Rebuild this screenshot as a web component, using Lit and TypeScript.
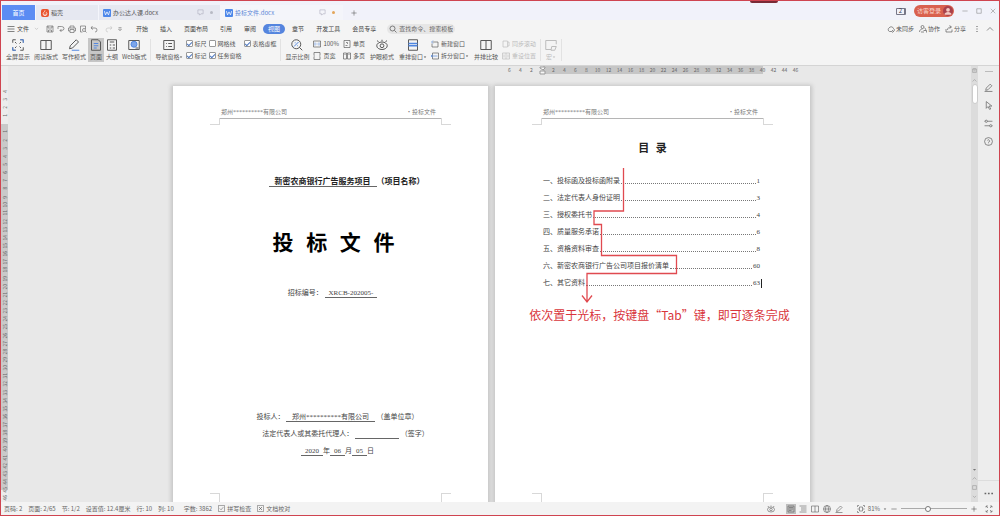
import { LitElement, html, svg, css, nothing } from "lit";
import { customElement, property, state } from "lit/decorators.js";
import { classMap } from "lit/directives/class-map.js";

/* Line icons, all drawn on a 16 x 16 grid. */
const ICONS: Record<string, unknown> = {
  menu: svg`<path d="M1 3h14M1 8h14M1 13h14"/>`,
  chevron: svg`<path d="M3 6l5 5 5-5"/>`,
  chevronUp: svg`<path d="M2 11l6-6 6 6"/>`,
  caret: svg`<path d="M3 6h10l-5 6z" fill="currentColor" stroke="none"/>`,
  save: svg`<path d="M2 2h12v12H2zM4 2v4h8V2M5 14v-4h6v4"/>`,
  exportPdf: svg`<path d="M2 3h7a5 4 0 0 1 0 8H6M9 8l-3 3 3 3M2 3v5"/>`,
  print: svg`<path d="M4 6V2h8v4M4 12H1V6h14v6h-3M4 9h8v6H4z"/>`,
  preview: svg`<path d="M13 8V2H3v12h4"/><circle cx="10" cy="10" r="3"/><path d="M12 12l3 3"/>`,
  undo: svg`<path d="M5 2L2 6l4 3M2 6h8a4 4 0 0 1 0 8"/>`,
  redo: svg`<path d="M11 2l3 4-4 3M14 6H6a4 4 0 0 0 0 8"/>`,
  more: svg`<path d="M4 4h8M4 8l4 5 4-5z"/>`,
  search: svg`<circle cx="7" cy="7" r="5"/><path d="M11 11l4 4"/>`,
  monitor: svg`<path d="M2 2h12v9H9l-3 3v-3H2z"/>`,
  plus: svg`<path d="M8 1v14M1 8h14"/>`,
  minus: svg`<path d="M1 8h14"/>`,
  square: svg`<path d="M2 2h12v12H2z"/>`,
  close: svg`<path d="M2 2l12 12M14 2L2 14"/>`,
  cloud: svg`<path d="M10 13H5a4 4 0 0 1-1-7 5 5 0 0 1 9 1 3.500 3.500 0 0 1 0 6M10 10l3 3-3 2"/>`,
  collab: svg`<circle cx="7" cy="4" r="3"/><path d="M1 14c0-4 3-6 6-6M4 14h6M11 6c3 1 3 3 1 5M9 11h6v4"/>`,
  share: svg`<path d="M2 8v6h12V9M5 10c0-4 3-6 7-6M9 1l4 3-4 3"/>`,
  dotsV: svg`<path d="M8 2v2M8 7v2M8 12v2" stroke-width="2"/>`,
  full: svg`<path d="M1 5V1h4M11 1h4v4M15 11v4h-4M5 15H1v-4M6 6L4 4M10 6l2-2M10 10l2 2M6 10l-2 2"/><path d="M11 1h4v4M5 15H1v-4" stroke="#4f86e0"/>`,
  book: svg`<path d="M1 2h14v12H1zM8 2v12"/>`,
  pen: svg`<path d="M3 9l8-8 3 3-8 8-4 1z"/><path d="M5 15h10" stroke="#4f86e0"/>`,
  page: svg`<path d="M2 1h9l3 3v11H2z"/><path d="M5 6h6M5 9h6M5 12h4" stroke="#4f86e0"/>`,
  outline: svg`<path d="M2 1h12v14H2zM5 4h6M5 8h2M9 8h3M5 12h2M9 12h3"/>`,
  web: svg`<path d="M1 2h14v12H1z"/><circle cx="8" cy="7" r="4" fill="#7da6ea" stroke="#4f86e0"/><path d="M10 12h4"/>`,
  nav: svg`<path d="M1 2h14v12H1zM4 6h1M4 10h1M7 6h5M7 10h5"/>`,
  zoom: svg`<circle cx="7" cy="7" r="6"/><path d="M11 11l4 4"/><path d="M4 10l6-6M5 5h1M8 9h1" stroke="#4f86e0"/>`,
  one: svg`<path d="M1 2h14v12H1z"/><path d="M4 5v6M12 5v6M8 6v1M8 9v1" stroke="#4f86e0"/>`,
  single: svg`<path d="M2 1h12v14H2zM6 5l3 0v3M5 11l4 0"/>`,
  wide: svg`<path d="M2 6V1h12v5M2 10v5h12v-5M1 8h3M12 8h3"/>`,
  multi: svg`<path d="M1 2h6v12H1zM9 2h6v12H9zM3 5h2M11 5h2"/>`,
  eye: svg`<ellipse cx="8" cy="9" rx="7" ry="5"/><circle cx="8" cy="9" r="2.500"/><path d="M3 4L2 2M8 3V1M13 4l1-2"/>`,
  arrange: svg`<path d="M2 1h12v14H2z"/><path d="M2 6h12M2 9h12" stroke="#4f86e0" stroke-width="2"/>`,
  newWin: svg`<path d="M3 4h11v10H2V7"/><path d="M4 1L1 4l3 3" stroke="#4f86e0"/>`,
  splitWin: svg`<path d="M3 2h12v12H3z"/><path d="M0 8h13M3 5L0 8l3 3" stroke="#4f86e0"/>`,
  sync: svg`<path d="M2 2h9v12H2zM12 4h2v8h-2"/>`,
  resetPos: svg`<path d="M1 2h14v12H1zM8 2v12M4 5v6M12 5v6"/>`,
  macro: svg`<path d="M15 7V2H1v12h7"/><path d="M9 10h6l-2 5H8z"/>`,
  edit: svg`<path d="M4 9l7-7 3 3-7 7-4 1zM1 15h14"/>`,
  cursor: svg`<path d="M4 1l10 8H9l3 5-2 1-3-5-3 3z"/>`,
  sliders: svg`<path d="M1 4h14M1 12h14"/><circle cx="4" cy="4" r="2" fill="#f0f0f0"/><circle cx="12" cy="12" r="2" fill="#f0f0f0"/>`,
  help: svg`<circle cx="8" cy="8" r="7"/><path d="M6 6a2 2 0 1 1 2 3v1M8 12v1"/>`,
  dotsH: svg`<path d="M1 8h3M7 8h3M13 8h3" stroke-width="3"/>`,
  lines: svg`<path d="M1 2h14M4 6h11M4 10h11M1 14h14"/>`,
  doc: svg`<path d="M2 2h12v12H2zM4 5h8M4 8h8M4 11h5"/>`,
  globe: svg`<circle cx="8" cy="8" r="7"/><ellipse cx="8" cy="8" rx="3" ry="7"/><path d="M1 8h14"/>`,
  fit: svg`<path d="M1 4V1h3M12 1h3v3M15 12v3h-3M4 15H1v-3M5 4h6v8H5zM1 8h3M12 8h3"/>`,
  expand: svg`<path d="M2 5V2h4M10 2h4v3M14 11v3h-4M6 14H2v-3M2 2l4 4M14 2l-4 4M14 14l-4-4M2 14l4-4"/>`,
  spell: svg`<path d="M1 1h14v14H1zM4 8l3 3 5-6"/>`,
  proof: svg`<path d="M1 1h14v14H1z"/><path d="M5 5l6 6M11 5l-6 6" stroke-width="2"/>`,
  toggle: svg`<path d="M2 3h12v11H2zM6 1v4M10 1v4M5 9h6"/>`,
};

@customElement("wps-icon")
export class WpsIcon extends LitElement {
  @property() name = "";
  static styles = css`
    :host { display: inline-flex; flex: none; width: 8px; height: 8px; }
    svg { width: 100%; height: 100%; fill: none; stroke: currentColor; stroke-width: 1.3; }
  `;
  render() {
    return html`<svg viewBox="0 0 16 16" aria-hidden="true">${ICONS[this.name] ?? nothing}</svg>`;
  }
}

const controls = css`
  :host, * { box-sizing: border-box; }
  button {
    font: inherit; color: inherit; background: none; border: 0; padding: 0; margin: 0;
    display: inline-flex; align-items: center; white-space: nowrap; cursor: pointer;
  }
`;

@customElement("title-bar")
export class TitleBar extends LitElement {
  static styles = [controls, css`
    :host { display: flex; align-items: flex-end; justify-content: space-between; height: 19px; padding-left: 1px; background: #f1f2fa; }
    .tabs { display: flex; height: 15px; }
    .tab { gap: 2px; padding: 0 5px; background: #e6e8f1; border-right: 1px solid #f4f5fb; color: #555; }
    .home { width: 34px; justify-content: center; background: #5b8cf3; color: #fff; }
    .shell { width: 63px; }
    .doc { width: 122px; padding: 0 4px; }
    .active { background: #f4f5fa; color: #5b87d8; }
    .grow { flex: 1; text-align: left; }
    .logo { display: inline-flex; align-items: center; justify-content: center; width: 8px; height: 8px; border-radius: 1px; background: #4d87ea; color: #fff; }
    .logo svg { width: 6px; height: 6px; fill: none; stroke: currentColor; stroke-width: 2; }
    .flame { border-radius: 2px; background: #e9532f; }
    .screen { color: #aab; width: 7px; height: 7px; margin-right: 4px; }
    .dot { width: 3px; height: 3px; margin-right: 3px; border-radius: 50%; background: #b8bac4; }
    .orange { background: #e3a65a; }
    .add { padding: 0 8px; color: #444; }
    .add wps-icon { width: 6px; height: 6px; }
    .win { display: flex; align-items: center; height: 18px; gap: 8px; padding-right: 3px; color: #777; }
    .win wps-icon { width: 6px; height: 6px; }
    .count { justify-content: center; width: 10px; height: 7px; border: 1px solid #778; border-right-width: 2px; border-radius: 1px; line-height: 6px; color: #445; }
    .login { gap: 2px; height: 12px; padding: 0 1px 0 3px; border-radius: 6px; background: #d9604f; color: #fbd9d2; }
    .face { width: 10px; height: 10px; border-radius: 50%; background: #a8404c; }
  `];
  render() {
    const w = html`<span class="logo"><svg viewBox="0 0 16 16"><path d="M1 3l3 10 4-8 4 8 3-10"/></svg></span>`;
    return html`
      <div class="tabs">
        <button class="tab home">首页</button>
        <button class="tab shell"><span class="logo flame"><svg viewBox="0 0 16 16"><path d="M8 1c-1 5-5 5-5 9a5 5 0 0 0 10 0c0-3-2-3-2-5M8 14v-4"/></svg></span>稻壳</button>
        <button class="tab doc">${w}<span class="grow">办公达人课.docx</span><wps-icon class="screen" name="monitor"></wps-icon><i class="dot"></i></button>
        <button class="tab doc active">${w}<span class="grow">投标文件.docx</span><wps-icon class="screen" name="monitor"></wps-icon><i class="dot orange"></i></button>
        <button class="add" aria-label="新建"><wps-icon name="plus"></wps-icon></button>
      </div>
      <div class="win">
        <button class="count">2</button>
        <button class="login">访客登录<svg class="face" viewBox="0 0 16 16"><circle cx="8" cy="6" r="3" fill="#f4c9c2"/><path d="M2 14c1-6 11-6 12 0z" fill="#f4c9c2"/></svg></button>
        <button aria-label="最小化"><wps-icon name="minus"></wps-icon></button>
        <button aria-label="最大化"><wps-icon name="square"></wps-icon></button>
        <button aria-label="关闭"><wps-icon name="close"></wps-icon></button>
      </div>`;
  }
}

@customElement("menu-bar")
export class MenuBar extends LitElement {
  @state() private current = "视图";
  static styles = [controls, css`
    :host { display: flex; align-items: center; justify-content: space-between; height: 17px; padding: 0 5px 0 6px; color: #444; }
    .left, .quick, .menus, .right { display: flex; align-items: center; }
    .file { gap: 2px; }
    .file .arrow { width: 5px; height: 5px; margin-left: 3px; color: #999; }
    .quick { gap: 3px; padding: 0 13px 0 7px; color: #666; }
    .quick .faint { color: #c4c4c4; margin-left: 4px; }
    .quick .small { width: 6px; height: 6px; margin-left: 1px; }
    .menus { gap: 12px; }
    .on { margin: 0 -5px; padding: 0 5px; height: 10px; border-radius: 5px; background: #5585de; color: #fff; }
    .search { display: flex; align-items: center; gap: 2px; height: 10px; margin-left: 11px; padding: 0 2px; border-radius: 5px; background: #e6e6e6; }
    .search input { width: 54px; height: 10px; padding: 0; border: 0; background: none; font: inherit; color: #555; }
    .search input::placeholder { color: #666; }
    .right { gap: 5px; color: #555; }
    .right button { gap: 1px; }
    .end { margin-left: 2px; }
  `];
  render() {
    const menus = ["开始", "插入", "页面布局", "引用", "审阅", "视图", "章节", "开发工具", "会员专享"];
    return html`
      <div class="left">
        <button class="file"><wps-icon name="menu"></wps-icon>文件<wps-icon class="arrow" name="chevron"></wps-icon></button>
        <div class="quick">
          ${[["save", "保存"], ["exportPdf", "输出"], ["print", "打印"], ["preview", "预览"], ["undo", "撤销"]].map(
            ([n, t]) => html`<button aria-label=${t}><wps-icon name=${n}></wps-icon></button>`)}
          <button class="faint" aria-label="恢复"><wps-icon name="redo"></wps-icon></button>
          <button aria-label="更多"><wps-icon class="small" name="more"></wps-icon></button>
        </div>
        <nav class="menus">
          ${menus.map((m) => html`<button class=${classMap({ on: m === this.current })} @click=${() => (this.current = m)}>${m}</button>`)}
        </nav>
        <label class="search"><wps-icon name="search"></wps-icon><input aria-label="查找" placeholder="查找命令、搜索模板" /></label>
      </div>
      <div class="right">
        <button><wps-icon name="cloud"></wps-icon>未同步</button>
        <button><wps-icon name="collab"></wps-icon>协作</button>
        <button><wps-icon name="share"></wps-icon>分享</button>
        <button class="end" aria-label="更多"><wps-icon name="dotsV"></wps-icon></button>
        <button aria-label="收起"><wps-icon name="chevronUp"></wps-icon></button>
      </div>`;
  }
}

@customElement("view-ribbon")
export class ViewRibbon extends LitElement {
  static styles = [controls, css`
    :host { display: flex; align-items: center; gap: 4px; height: 29px; padding: 0 5px 3px; color: #555; border-bottom: 1px solid #d4d4d4; }
    .tool { flex-direction: column; gap: 1px; height: 24px; padding-top: 1px; line-height: 10px; }
    .tool wps-icon { width: 12px; height: 12px; }
    .tool .label wps-icon, .label wps-icon { width: 4px; height: 4px; }
    .label { display: flex; align-items: center; }
    .on { margin: 0 -2px; padding: 1px 2px 0; background: #c6c6c6; }
    .rule { flex: none; width: 1px; height: 22px; background: #e2e2e2; }
    .pair { display: grid; grid-template-columns: auto auto; gap: 2px 4px; }
    .pair.solo { grid-template-columns: auto; }
    .pair button, .pair label { display: flex; align-items: center; gap: 2px; height: 10px; white-space: nowrap; }
    .pair.checks { grid-template-columns: 20px 32px auto; column-gap: 3px; margin-left: -1px; }
    .checks label { gap: 1px; }
    .more { padding-left: 1px; }
    input { appearance: none; flex: none; display: flex; justify-content: center; width: 7px; height: 7px; margin: 0; border: 1px solid #999; border-radius: 1px; background: #fff; }
    input:checked::before { content: ""; width: 2px; height: 4px; border: solid #4f79c0; border-width: 0 1px 1px 0; transform: rotate(45deg); }
    .off { color: #bbb; }
  `];
  private tool(icon: string, label: string, cls = "", drop = false) {
    return html`<button class="tool ${cls}"><wps-icon name=${icon}></wps-icon><span class="label">${label}${drop ? html`<wps-icon name="caret"></wps-icon>` : nothing}</span></button>`;
  }
  private mini(icon: string, label: string, drop = false) {
    return html`<button><wps-icon name=${icon}></wps-icon><span class="label">${label}${drop ? html`<wps-icon name="caret"></wps-icon>` : nothing}</span></button>`;
  }
  private check(label: string, on: boolean) {
    return html`<label><input type="checkbox" ?checked=${on} />${label}</label>`;
  }
  render() {
    return html`
      ${this.tool("full", "全屏显示")}${this.tool("book", "阅读版式")}${this.tool("pen", "写作模式")}
      ${this.tool("page", "页面", "on")}${this.tool("outline", "大纲")}${this.tool("web", "Web版式")}
      <i class="rule"></i>
      ${this.tool("nav", "导航窗格", "", true)}
      <div class="pair checks">
        ${this.check("标尺", true)}${this.check("网格线", false)}${this.check("表格虚框", true)}
        ${this.check("标记", true)}${this.check("任务窗格", true)}
      </div>
      <i class="rule"></i>
      ${this.tool("zoom", "显示比例")}
      <div class="pair">${this.mini("one", "100%")}${this.mini("single", "单页")}${this.mini("wide", "页宽")}${this.mini("multi", "多页")}</div>
      <div class="more">${this.tool("eye", "护眼模式")}</div>
      <div class="more">${this.tool("arrange", "重排窗口", "", true)}</div>
      <div class="pair solo">${this.mini("newWin", "新建窗口")}${this.mini("splitWin", "拆分窗口", true)}</div>
      <div class="more">${this.tool("book", "并排比较")}</div>
      <div class="pair solo off">${this.mini("sync", "同步滚动")}${this.mini("resetPos", "重设位置")}</div>
      <i class="rule"></i>
      ${this.tool("macro", "宏", "off", true)}
      <i class="rule"></i>`;
  }
}

@customElement("doc-page")
export class DocPage extends LitElement {
  static styles = css`
    * { box-sizing: border-box; }
    :host {
      position: relative; display: flex; flex-direction: column; width: 315px; flex: none; background: #fff; color: #444;
      font-family: "Liberation Serif", "Noto Sans CJK SC", serif; box-shadow: 0 1px 4px 2px #c4c4c4;
    }
    .head, .foot { display: grid; grid-template-columns: 10px 1fr 10px; margin: 0 37px; }
    .head { padding-top: 20px; }
    .line { display: flex; justify-content: space-between; height: 13px; padding: 0 5px 0 1px; line-height: 13px; font-size: 6px; color: #777; border-bottom: 1px solid #b5b5b5; }
    .mark { height: 7px; border: 0 solid #d8d8d8; }
    .tl { border-width: 0 1px 1px 0; }
    .tr { border-width: 0 0 1px 1px; }
    .head .mark { align-self: end; margin-bottom: -6px; }
    .foot { margin-top: auto; }
    .foot .mark { height: 9px; }
    .bl { border-width: 1px 1px 0 0; }
    .br { grid-column: 3; border-width: 1px 0 0 1px; }
  `;
  render() {
    return html`
      <header class="head">
        <i class="mark tl"></i>
        <div class="line"><span>郑州**********有限公司</span><span>・投标文件</span></div>
        <i class="mark tr"></i>
      </header>
      <slot></slot>
      <footer class="foot"><i class="mark bl"></i><i class="mark br"></i></footer>`;
  }
}

const TOC: [string, string][] = [
  ["一、投标函及投标函附录", "1"],
  ["二、法定代表人身份证明", "3"],
  ["三、授权委托书", "4"],
  ["四、质量服务承诺", "6"],
  ["五、资格资料审查", "8"],
  ["六、新密农商银行广告公司项目报价清单", "60"],
  ["七、其它资料", "63"],
];

@customElement("doc-canvas")
export class DocCanvas extends LitElement {
  static styles = css`
    * { box-sizing: border-box; }
    :host { display: grid; grid-template-columns: 7px 1fr 7px 21px; min-height: 0; background: #e8e8e8; color: #666; }
    .vrule { display: grid; padding-top: 21px; overflow: hidden; font-size: 5px; background: #ececec; }
    .bands, .ticks { grid-area: 1 / 1; display: flex; min-height: 0; }
    .vrule .bands, .vrule .ticks { flex-direction: column; }
    .vrule .ticks span { flex: 1 1 0; min-height: 0; display: flex; align-items: center; justify-content: center; writing-mode: sideways-lr; line-height: 6px; }
    .before { flex: 4.5; }
    .body { flex: 45; background: #c9c9c9; }
    .after { flex: 1.5; }
    .work { display: flex; flex-direction: column; align-items: center; overflow: hidden; min-width: 0; padding-left: 4px; }
    .hrule { display: grid; width: 637px; height: 8px; flex: none; padding-left: 331px; font-size: 5px; }
    .hrule .ticks span { flex: none; width: 11px; line-height: 8px; text-align: center; }
    .hrule .bands { padding-left: 39px; }
    .hrule .bands i { width: 220px; background: #c6c6c6; }
    .hrule svg { width: 7px; height: 9px; fill: #f6f6f6; stroke: #999; }
    .pages { display: flex; flex: 1; gap: 7px; padding-top: 12px; min-height: 0; }
    .scroll { display: flex; flex-direction: column; align-items: center; background: #dcdcdc; color: #777; }
    .scroll wps-icon { width: 5px; height: 5px; }
    .corner { margin: 2px 0 5px; }
    .thumb { width: 6px; height: 20px; margin-top: 1px; border: 1px solid #ccc; border-radius: 3px; background: #fff; }
    .jump { display: flex; flex-direction: column; gap: 4px; margin: auto 0 3px; }
    .side { display: flex; flex-direction: column; align-items: center; gap: 9px; padding: 5px 0 4px; background: #ededed; color: #666; }
    .side wps-icon { width: 9px; height: 9px; }
    .side .grip { width: 8px; height: 1px; margin: 0 0 2px; background: #bbb; }
    .side .tail { width: 100%; margin-top: auto; padding-top: 8px; border-top: 1px solid #ddd; display: flex; justify-content: center; }

    .cover { display: flex; flex-direction: column; align-items: center; padding-top: 58px; text-align: center; white-space: pre; }
    h1, h2, p { margin: 0; }
    u { text-decoration: none; border-bottom: 1px solid #666; padding: 0 4px; }
    .project { font-size: 8px; line-height: 10px; font-weight: 700; color: #222; padding-left: 32px; }
    .project u { padding: 0 6px; }
    .name { margin-top: 42px; font: 700 21px/31px "Liberation Mono", "Noto Sans CJK SC", monospace; color: #000; padding-left: 6px; }
    .small { font-size: 7px; line-height: 10px; }
    .code { margin-top: 28px; padding-left: 4px; }
    .sign { display: flex; flex-direction: column; gap: 7px; margin-top: 114px; padding-left: 14px; align-items: center; }
    .sign .rep { padding-left: 16px; }
    .sign u.blank { padding: 0 22px; }

    .toc-title { margin-top: 23px; font: 700 11px/14px "Liberation Mono", "Noto Sans CJK SC", monospace; color: #222; text-align: center; }
    ol { display: flex; flex-direction: column; gap: 7px; margin: 20px 50px 0 48px; padding: 0; list-style: none; font-size: 7px; }
    li { display: flex; align-items: center; gap: 1px; height: 10px; line-height: 10px; white-space: nowrap; }
    .leader { flex: 1; height: 6px; border-bottom: 1px dotted #777; }
    .caret { width: 1px; height: 9px; margin-right: -2px; background: #222; }
    .ink { position: absolute; top: 80px; left: 0; width: 100%; color: #e04a50; }
    .ink svg { display: block; width: 315px; height: 140px; fill: none; stroke: currentColor; stroke-width: 1.3; }
    .note { padding-left: 14px; font: 12px/18px "Noto Sans CJK SC", sans-serif; text-align: center; white-space: nowrap; color: #d9363c; }
  `;
  render() {
    const v = Array.from({ length: 51 }, (_, i) => i - 4);
    const h = Array.from({ length: 27 }, (_, i) => i - 3);
    return html`
      <div class="vrule">
        <div class="bands"><i class="before"></i><i class="body"></i><i class="after"></i></div>
        <div class="ticks">${v.map((n) => html`<span>${n === 0 ? "" : Math.abs(n)}</span>`)}</div>
      </div>
      <main class="work">
        <div class="hrule">
          <div class="bands"><i></i></div>
          <div class="ticks">${h.map((n) => html`<span>${n === 0 ? html`<svg viewBox="0 0 7 9"><path d="M1 1h5v1L4 4 1 2zM1 5h5v3H1z"/></svg>` : Math.abs(n * 2)}</span>`)}</div>
        </div>
        <div class="pages">
          <doc-page>
            <div class="cover">
              <p class="project"><u>新密农商银行广告服务项目</u>（项目名称）</p>
              <h1 class="name">投 标 文 件</h1>
              <p class="small code">招标编号： <u>XRCB-202005-</u></p>
              <div class="sign small">
                <p>投标人： <u> 郑州**********有限公司 </u> （盖单位章）</p>
                <p class="rep">法定代表人或其委托代理人： <u class="blank"></u> （签字）</p>
                <p><u>2020</u>年<u>06</u>月<u>05</u>日</p>
              </div>
            </div>
          </doc-page>
          <doc-page>
            <h2 class="toc-title">目 录</h2>
            <ol>
              ${TOC.map(([t, p], i) => html`<li><span>${t}</span><i class="leader"></i><span>${p}</span>${i === TOC.length - 1 ? html`<i class="caret"></i>` : nothing}</li>`)}
            </ol>
            <div class="ink">
              <svg viewBox="0 0 315 140"><path d="M128.500 2V45H99V58.500H106.500V89.500H181.500V107.500H92V136M87 129.500l5 6.500 5-6.500"/></svg>
              <p class="note">依次置于光标，按键盘“Tab”键，即可逐条完成</p>
            </div>
          </doc-page>
        </div>
      </main>
      <div class="scroll">
        <wps-icon class="corner" name="toggle"></wps-icon>
        <wps-icon name="chevronUp"></wps-icon>
        <i class="thumb"></i>
        <div class="jump">${["caret", "chevronUp", "square", "chevron"].map((n) => html`<wps-icon name=${n}></wps-icon>`)}</div>
      </div>
      <aside class="side">
        <i class="grip"></i>
        ${["edit", "cursor", "sliders", "help"].map((n) => html`<wps-icon name=${n}></wps-icon>`)}
        <div class="tail"><wps-icon name="dotsH"></wps-icon></div>
      </aside>`;
  }
}

@customElement("status-bar")
export class StatusBar extends LitElement {
  @state() private zoom = 81;
  static styles = [controls, css`
    :host { display: flex; align-items: center; justify-content: space-between; height: 13px; padding: 0 6px 0 3px; background: #f3f3f3; color: #666; white-space: nowrap; }
    .info, .view { display: flex; align-items: center; }
    .info { gap: 6px; }
    .info button { gap: 2px; }
    .info .words { margin-left: 4px; }
    .info wps-icon { width: 7px; height: 7px; }
    .view { gap: 4px; }
    .view .lead { margin-right: 8px; }
    .on { margin: 0 -1px; padding: 1px; background: #bdbdbd; }
    .fit { margin-left: 10px; gap: 3px; }
    .fit .drop { width: 4px; height: 4px; }
    .step wps-icon { width: 6px; height: 6px; color: #333; }
    input { appearance: none; width: 66px; height: 8px; margin: 0; background: linear-gradient(#aaa, #aaa) center / 100% 1px no-repeat; }
    input::-webkit-slider-thumb { appearance: none; width: 6px; height: 6px; border: 1px solid #777; border-radius: 50%; background: #fff; }
    .last { margin-left: 4px; }
  `];
  render() {
    return html`
      <div class="info">
        <span>页码: 2</span><span>页面: 2/65</span><span>节: 1/2</span><span>设置值: 12.4厘米</span>
        <span>行: 10</span><span>列: 10</span><span class="words">字数: 3862</span>
        <button><wps-icon name="spell"></wps-icon>拼写检查</button>
        <button><wps-icon name="proof"></wps-icon>文档校对</button>
      </div>
      <div class="view">
        <button class="lead" aria-label="护眼"><wps-icon name="eye"></wps-icon></button>
        <button class="on" aria-label="页面视图"><wps-icon name="doc"></wps-icon></button>
        ${[["lines", "大纲"], ["book", "阅读"], ["globe", "Web"], ["edit", "写作"]].map(([n, t]) => html`<button aria-label=${t}><wps-icon name=${n}></wps-icon></button>`)}
        <button class="fit"><wps-icon name="fit"></wps-icon>${this.zoom}%<wps-icon class="drop" name="caret"></wps-icon></button>
        <button class="step" aria-label="缩小" @click=${() => this.zoom--}><wps-icon name="minus"></wps-icon></button>
        <input type="range" min="10" max="190" .value=${String(this.zoom)} aria-label="缩放" @input=${(e: Event) => (this.zoom = Number((e.target as HTMLInputElement).value))} />
        <button class="step" aria-label="放大" @click=${() => this.zoom++}><wps-icon name="plus"></wps-icon></button>
        <button class="last" aria-label="全屏"><wps-icon name="expand"></wps-icon></button>
      </div>`;
  }
}

@customElement("app-root")
export class AppRoot extends LitElement {
  static styles = css`
    :host {
      position: relative; display: grid; grid-template-rows: auto auto auto 1fr auto; box-sizing: border-box; height: 100vh;
      border: 1px solid #cf4450; background: #f4f4f4; overflow: hidden;
      font: 6px/10px "Noto Sans CJK SC", "Noto Sans", sans-serif;
    }
    .handle { position: absolute; top: -1px; left: 75%; width: 28px; height: 3px; border-radius: 0 0 2px 2px; background: #7a2a35; }
  `;
  render() {
    return html`
      <title-bar></title-bar>
      <menu-bar></menu-bar>
      <view-ribbon></view-ribbon>
      <doc-canvas></doc-canvas>
      <status-bar></status-bar>
      <i class="handle"></i>`;
  }
}
